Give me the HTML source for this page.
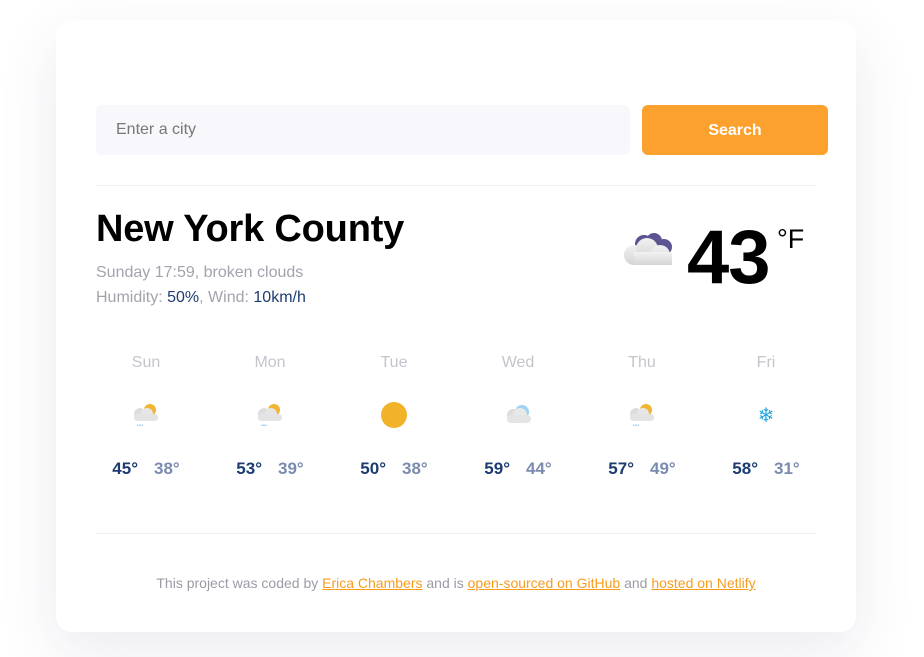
<!DOCTYPE html>
<html><head><meta charset="utf-8"><style>
*{box-sizing:border-box;margin:0;padding:0}
body{width:924px;height:657px;background:#fff;font-family:"Liberation Sans",Arial,sans-serif;position:relative;overflow:hidden}
.card{position:absolute;left:56px;top:20px;width:800px;height:612px;background:#fff;border-radius:16px;box-shadow:0 20px 60px rgba(60,60,110,0.10)}
.input{position:absolute;left:96px;top:105px;width:534px;height:50px;background:#f7f7fc;border-radius:6px;color:#777;font-size:16px;padding:16px 20px}
.btn{position:absolute;left:642px;top:105px;width:186px;height:50px;background:#fca12e;border-radius:6px;color:#fff;font-weight:bold;font-size:16px;text-align:center;line-height:52px}
.hr{position:absolute;left:96px;width:720px;height:1px;background:#f0f0f4}
h1{position:absolute;left:96px;top:208px;font-size:38px;font-weight:bold;color:#000;letter-spacing:-0.2px}
.sub{position:absolute;left:96px;color:#a3a3ad;font-size:16px}
.sub b{font-weight:normal;color:#1d3c72}
.temp{position:absolute;left:687px;top:214px;font-size:76px;font-weight:bold;color:#000;letter-spacing:-1px}
.unit{position:absolute;left:777px;top:224px;font-size:27px;color:#000}
.day{position:absolute;width:124px;text-align:center}
.dn{top:354px;color:#c4c4cc;font-size:16px}
.tt{top:459px;font-size:17px;font-weight:bold}
.tt .h{color:#1d3c72;margin-right:16px}.tt .l{color:#7b8bb0}
.foot{position:absolute;left:0;width:912px;top:575px;text-align:center;color:#9b9ba5;font-size:14px}
.foot a{color:#f89c1c;text-decoration:underline}
</style></head><body>
<div class="card"></div>
<div class="input">Enter a city</div>
<div class="btn">Search</div>
<div class="hr" style="top:185px"></div>
<h1>New York County</h1>
<div class="sub" style="top:264px">Sunday 17:59, broken clouds</div>
<div class="sub" style="top:289px">Humidity: <b>50%</b>, Wind: <b>10km/h</b></div>
<svg style="position:absolute;left:620px;top:230px" width="54" height="38" viewBox="0 0 54 38">
<defs><linearGradient id="g" x1="0" y1="0" x2="0" y2="1"><stop offset="0" stop-color="#f2f2f2"/><stop offset="1" stop-color="#d4d4d4"/></linearGradient></defs>
<circle cx="24" cy="14" r="9" fill="#5b5490"/><circle cx="34" cy="11" r="8" fill="#5b5490"/><circle cx="44" cy="17" r="8" fill="#5b5490"/>
<circle cx="14" cy="25" r="10" fill="url(#g)"/><circle cx="27" cy="19" r="11" fill="url(#g)"/><circle cx="40" cy="25" r="10" fill="url(#g)"/><rect x="14" y="22" width="38" height="13" fill="url(#g)"/>
</svg>
<div class="temp">43</div><div class="unit">°F</div>

<div class="day dn" style="left:84px">Sun</div><div class="day dn" style="left:208px">Mon</div><div class="day dn" style="left:332px">Tue</div><div class="day dn" style="left:456px">Wed</div><div class="day dn" style="left:580px">Thu</div><div class="day dn" style="left:704px">Fri</div>

<svg style="position:absolute;left:130px;top:401px" width="32" height="28"><circle cx="20" cy="9" r="6" fill="#f2b531"/><circle cx="10" cy="13" r="6" fill="#ddd"/><circle cx="17" cy="13" r="6" fill="#e6e6e6"/><rect x="4" y="13" width="24" height="7" rx="3" fill="#e4e4e4"/><text x="7" y="27" font-size="8" fill="#4aa3e0">ᵕᵕ</text></svg>
<svg style="position:absolute;left:254px;top:401px" width="32" height="28"><circle cx="20" cy="9" r="6" fill="#f2b531"/><circle cx="10" cy="13" r="6" fill="#ddd"/><circle cx="17" cy="13" r="6" fill="#e6e6e6"/><rect x="4" y="13" width="24" height="7" rx="3" fill="#e4e4e4"/><text x="7" y="27" font-size="8" fill="#4aa3e0">ᵕᵕ</text></svg>
<svg style="position:absolute;left:380px;top:401px" width="28" height="28"><circle cx="14" cy="14" r="13" fill="#f1b32a"/></svg>
<svg style="position:absolute;left:503px;top:403px" width="30" height="22"><circle cx="19" cy="9" r="7" fill="#9fd3f4"/><circle cx="10" cy="12" r="6" fill="#ddd"/><circle cx="17" cy="12" r="7" fill="#e8e8e8"/><rect x="4" y="12" width="24" height="8" rx="4" fill="#e4e4e4"/></svg>
<svg style="position:absolute;left:626px;top:401px" width="32" height="28"><circle cx="20" cy="9" r="6" fill="#f2b531"/><circle cx="10" cy="13" r="6" fill="#ddd"/><circle cx="17" cy="13" r="6" fill="#e6e6e6"/><rect x="4" y="13" width="24" height="7" rx="3" fill="#e4e4e4"/><text x="7" y="27" font-size="8" fill="#4aa3e0">ᵕᵕ</text></svg>
<div class="day" style="left:704px;top:403px;font-size:20px;color:#2aa7d8">❄</div>

<div class="day tt" style="left:84px"><span class="h">45°</span><span class="l">38°</span></div>
<div class="day tt" style="left:208px"><span class="h">53°</span><span class="l">39°</span></div>
<div class="day tt" style="left:332px"><span class="h">50°</span><span class="l">38°</span></div>
<div class="day tt" style="left:456px"><span class="h">59°</span><span class="l">44°</span></div>
<div class="day tt" style="left:580px"><span class="h">57°</span><span class="l">49°</span></div>
<div class="day tt" style="left:704px"><span class="h">58°</span><span class="l">31°</span></div>

<div class="hr" style="top:533px"></div>
<div class="foot">This project was coded by <a>Erica Chambers</a> and is <a>open-sourced on GitHub</a> and <a>hosted on Netlify</a></div>
</body></html>
